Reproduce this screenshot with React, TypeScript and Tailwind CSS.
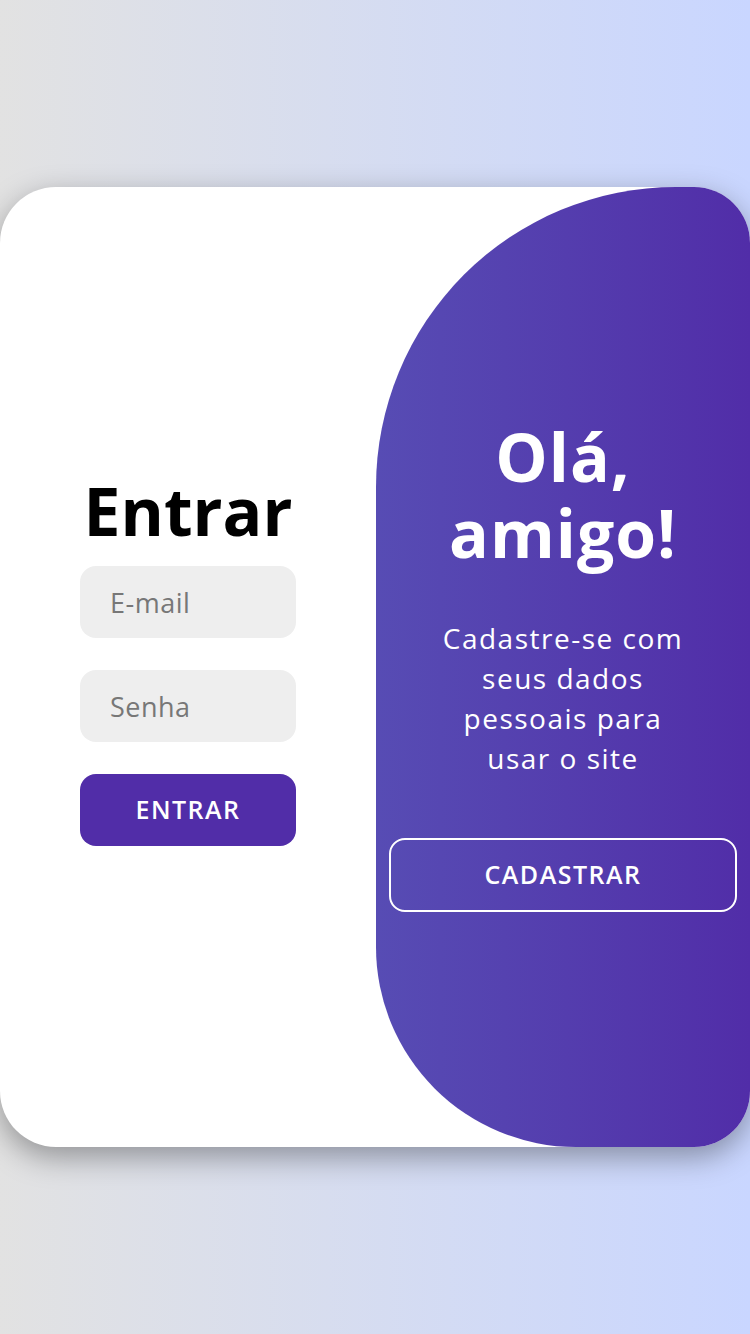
export default function App() {
  return (
    <div className="flex min-h-screen items-center bg-linear-to-r from-[#e2e2e2] to-[#c9d6ff] font-['Open_Sans',sans-serif]">
      <div className="flex h-[960px] w-full overflow-hidden rounded-[56px] bg-white shadow-[0_10px_30px_rgba(0,0,0,0.35)]">
        {/* login form */}
        <form className="flex w-[376px] shrink-0 flex-col items-center justify-center px-20">
          <h1 className="mb-[34px] text-[66px] font-bold leading-[44px] text-black">Entrar</h1>
          <input
            type="email"
            placeholder="E-mail"
            className="h-[72px] w-full rounded-2xl bg-[#eee] px-[30px] text-[27px] tracking-[0.5px] outline-none placeholder:text-[#777]"
          />
          <input
            type="password"
            placeholder="Senha"
            className="mt-8 h-[72px] w-full rounded-2xl bg-[#eee] px-[30px] text-[27px] tracking-[0.5px] outline-none placeholder:text-[#777]"
          />
          <button
            type="button"
            className="mt-8 h-[72px] w-full rounded-2xl bg-[#512da8] text-[25px] font-semibold uppercase tracking-[1.5px] text-white"
          >
            Entrar
          </button>
        </form>

        {/* toggle panel */}
        <div className="flex w-[374px] min-w-0 flex-col items-center justify-center rounded-[300px_0_0_200px] bg-linear-to-r from-[#574cb4] to-[#512da8] text-center text-white">
          <h1 className="-mt-1 text-[66px] font-bold leading-[76px] tracking-[1px]">
            Olá,
            <br />
            amigo!
          </h1>
          <p className="mt-12 w-[250px] text-[28px] leading-[40px] tracking-[1.5px]">
            Cadastre-se com seus dados pessoais para usar o site
          </p>
          <button
            type="button"
            className="mt-[60px] h-[74px] w-[348px] shrink-0 rounded-2xl border-2 border-white text-[25px] font-semibold uppercase tracking-[1.5px] text-white"
          >
            Cadastrar
          </button>
        </div>
      </div>
    </div>
  );
}
